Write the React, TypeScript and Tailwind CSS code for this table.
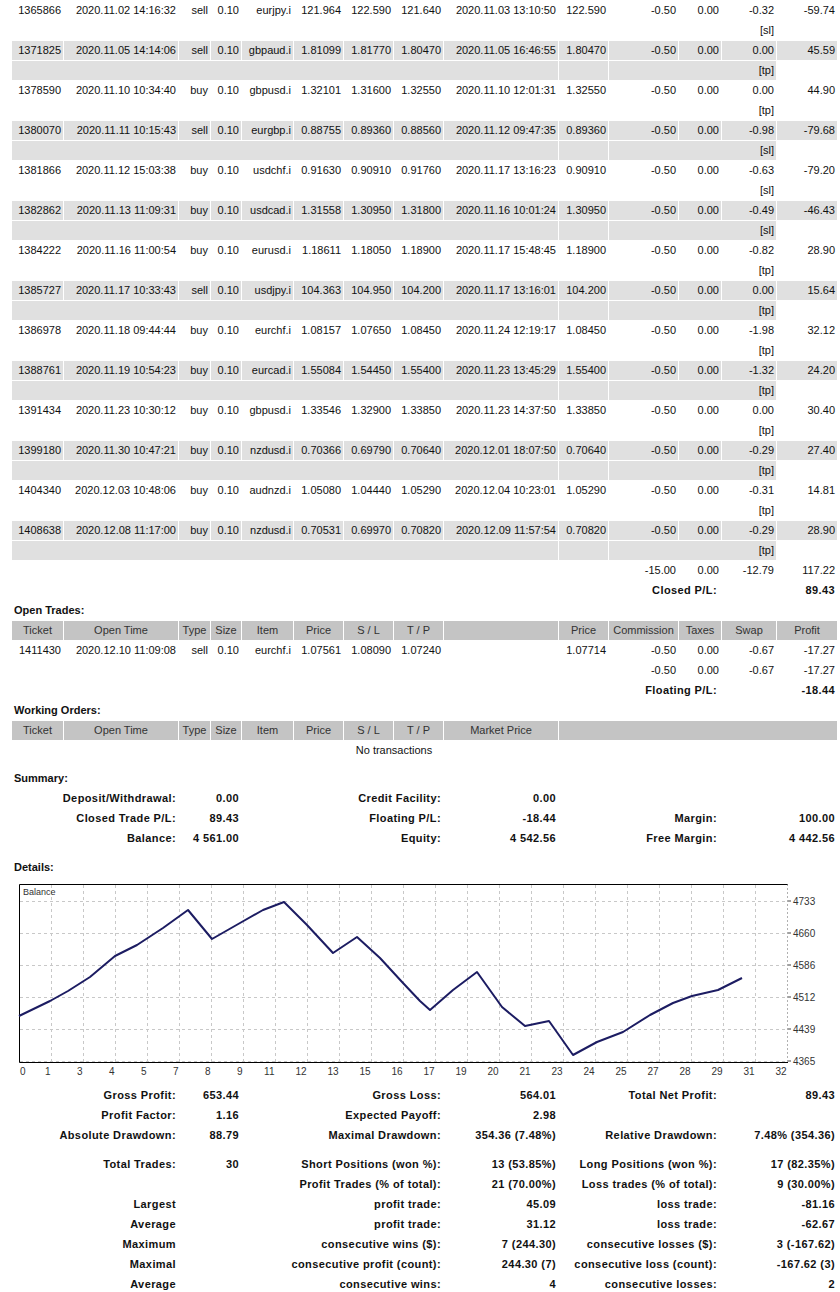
import React from "react";

type Trade = {
  ticket: string;
  open: string;
  type: string;
  item: string;
  price: string;
  sl: string;
  tp: string;
  close: string;
  cprice: string;
  swap: string;
  profit: string;
  comment: string;
};

const trades: Trade[] = [
  { ticket: "1365866", open: "2020.11.02 14:16:32", type: "sell", item: "eurjpy.i", price: "121.964", sl: "122.590", tp: "121.640", close: "2020.11.03 13:10:50", cprice: "122.590", swap: "-0.32", profit: "-59.74", comment: "[sl]" },
  { ticket: "1371825", open: "2020.11.05 14:14:06", type: "sell", item: "gbpaud.i", price: "1.81099", sl: "1.81770", tp: "1.80470", close: "2020.11.05 16:46:55", cprice: "1.80470", swap: "0.00", profit: "45.59", comment: "[tp]" },
  { ticket: "1378590", open: "2020.11.10 10:34:40", type: "buy", item: "gbpusd.i", price: "1.32101", sl: "1.31600", tp: "1.32550", close: "2020.11.10 12:01:31", cprice: "1.32550", swap: "0.00", profit: "44.90", comment: "[tp]" },
  { ticket: "1380070", open: "2020.11.11 10:15:43", type: "sell", item: "eurgbp.i", price: "0.88755", sl: "0.89360", tp: "0.88560", close: "2020.11.12 09:47:35", cprice: "0.89360", swap: "-0.98", profit: "-79.68", comment: "[sl]" },
  { ticket: "1381866", open: "2020.11.12 15:03:38", type: "buy", item: "usdchf.i", price: "0.91630", sl: "0.90910", tp: "0.91760", close: "2020.11.17 13:16:23", cprice: "0.90910", swap: "-0.63", profit: "-79.20", comment: "[sl]" },
  { ticket: "1382862", open: "2020.11.13 11:09:31", type: "buy", item: "usdcad.i", price: "1.31558", sl: "1.30950", tp: "1.31800", close: "2020.11.16 10:01:24", cprice: "1.30950", swap: "-0.49", profit: "-46.43", comment: "[sl]" },
  { ticket: "1384222", open: "2020.11.16 11:00:54", type: "buy", item: "eurusd.i", price: "1.18611", sl: "1.18050", tp: "1.18900", close: "2020.11.17 15:48:45", cprice: "1.18900", swap: "-0.82", profit: "28.90", comment: "[tp]" },
  { ticket: "1385727", open: "2020.11.17 10:33:43", type: "sell", item: "usdjpy.i", price: "104.363", sl: "104.950", tp: "104.200", close: "2020.11.17 13:16:01", cprice: "104.200", swap: "0.00", profit: "15.64", comment: "[tp]" },
  { ticket: "1386978", open: "2020.11.18 09:44:44", type: "buy", item: "eurchf.i", price: "1.08157", sl: "1.07650", tp: "1.08450", close: "2020.11.24 12:19:17", cprice: "1.08450", swap: "-1.98", profit: "32.12", comment: "[tp]" },
  { ticket: "1388761", open: "2020.11.19 10:54:23", type: "buy", item: "eurcad.i", price: "1.55084", sl: "1.54450", tp: "1.55400", close: "2020.11.23 13:45:29", cprice: "1.55400", swap: "-1.32", profit: "24.20", comment: "[tp]" },
  { ticket: "1391434", open: "2020.11.23 10:30:12", type: "buy", item: "gbpusd.i", price: "1.33546", sl: "1.32900", tp: "1.33850", close: "2020.11.23 14:37:50", cprice: "1.33850", swap: "0.00", profit: "30.40", comment: "[tp]" },
  { ticket: "1399180", open: "2020.11.30 10:47:21", type: "buy", item: "nzdusd.i", price: "0.70366", sl: "0.69790", tp: "0.70640", close: "2020.12.01 18:07:50", cprice: "0.70640", swap: "-0.29", profit: "27.40", comment: "[tp]" },
  { ticket: "1404340", open: "2020.12.03 10:48:06", type: "buy", item: "audnzd.i", price: "1.05080", sl: "1.04440", tp: "1.05290", close: "2020.12.04 10:23:01", cprice: "1.05290", swap: "-0.31", profit: "14.81", comment: "[tp]" },
  { ticket: "1408638", open: "2020.12.08 11:17:00", type: "buy", item: "nzdusd.i", price: "0.70531", sl: "0.69970", tp: "0.70820", close: "2020.12.09 11:57:54", cprice: "0.70820", swap: "-0.29", profit: "28.90", comment: "[tp]" },
];

const colWidths = [
  "w-[51px]", "w-[114px]", "w-[31px]", "w-[30px]", "w-[51px]", "w-[49px]", "w-[49px]",
  "w-[49px]", "w-[114px]", "w-[49px]", "w-[69px]", "w-[42px]", "w-[54px]", "w-[60px]",
];

const td = "h-[19px] p-0 pr-[2px] text-right whitespace-nowrap overflow-hidden";
const gray = "bg-[#e0e0e0]";
const head = "h-[19px] p-0 text-center whitespace-nowrap overflow-hidden bg-[#c4c4c4] text-[#333] font-normal";
const bold = "h-[19px] p-0 pr-[2px] text-right whitespace-nowrap font-bold tracking-[0.4px]";

function TradeRows({ t, shaded }: { t: Trade; shaded: boolean }) {
  const c = shaded ? `${td} ${gray}` : td;
  return (
    <>
      <tr>
        <td className={c}>{t.ticket}</td>
        <td className={c}>{t.open}</td>
        <td className={c}>{t.type}</td>
        <td className={c}>0.10</td>
        <td className={c}>{t.item}</td>
        <td className={c}>{t.price}</td>
        <td className={c}>{t.sl}</td>
        <td className={c}>{t.tp}</td>
        <td className={c}>{t.close}</td>
        <td className={c}>{t.cprice}</td>
        <td className={c}>-0.50</td>
        <td className={c}>0.00</td>
        <td className={c}>{t.swap}</td>
        <td className={c}>{t.profit}</td>
      </tr>
      <tr>
        <td colSpan={9} className={c}></td>
        <td className={c}></td>
        <td colSpan={3} className={c}>{t.comment}</td>
      </tr>
    </>
  );
}

function SectionTitle({ text, tall }: { text: string; tall?: boolean }) {
  return (
    <tr>
      <td colSpan={14} className={`${tall ? "h-[20px]" : "h-[19px]"} p-0 pl-[2px] text-left font-bold`}>
        {text}
      </td>
    </tr>
  );
}

function Spacer({ h }: { h: string }) {
  return (
    <tr>
      <td colSpan={14} className={`${h} p-0 leading-none`}></td>
    </tr>
  );
}

function StatRow({ cells }: { cells: string[] }) {
  return (
    <tr>
      <td colSpan={2} className={bold}>{cells[0]}</td>
      <td colSpan={2} className={bold}>{cells[1]}</td>
      <td colSpan={4} className={bold}>{cells[2]}</td>
      <td colSpan={1} className={bold}>{cells[3]}</td>
      <td colSpan={3} className={`${bold} pr-[4px]`}>{cells[4]}</td>
      <td colSpan={2} className={bold}>{cells[5]}</td>
    </tr>
  );
}

const balancePts =
  "19,1016 50,1001 68,991 90,977 115,956 137,945 163,928 188,910 212,939 240,923 263,910 284,902 307,925 333,953 357,937 380,958 403,983 420,1001 430,1010 453,990 477,972 502,1007 525,1026 549,1021 573,1055 597,1042 623,1032 650,1015 673,1003 692,996 718,990 742,978";

const xLabels = ["0", "1", "3", "4", "5", "7", "8", "9", "11", "12", "13", "15", "16", "17", "19", "20", "21", "23", "24", "25", "27", "28", "29", "31", "32"];
const yLabels = ["4733", "4660", "4586", "4512", "4439", "4365"];

function BalanceChart() {
  return (
    <svg className="block" width={825} height={207} viewBox="12 878 825 207">
      <rect x={19.5} y={884.5} width={768} height={178} fill="#fff" />
      {Array.from({ length: 23 }, (_, i) => {
        const x = 19.5 + 32 * (i + 1);
        return <line key={i} x1={x} y1={885} x2={x} y2={1062} stroke="#c8c8c8" strokeDasharray="3 3" />;
      })}
      {yLabels.map((_, i) => {
        const y = 901.5 + 32 * i;
        return <line key={i} x1={20} y1={y} x2={788} y2={y} stroke="#c8c8c8" strokeDasharray="3 3" />;
      })}
      <line x1={787.5} y1={884} x2={787.5} y2={1063} stroke="#b0b0b0" strokeDasharray="2 2" />
      <path d="M787.5 884.5 H19.5 V1062.5 H788" fill="none" stroke="#000" strokeWidth={1} />
      {yLabels.map((l, i) => {
        const y = 901 + 32 * i;
        return (
          <g key={l}>
            <line x1={788} y1={y} x2={791} y2={y} stroke="#444" />
            <text x={793} y={y + 3.5} fontSize={10} fill="#333" fontFamily="'Liberation Sans', Arial, sans-serif">
              {l}
            </text>
          </g>
        );
      })}
      {xLabels.map((l, i) => (
        <text
          key={l}
          x={i === 0 ? 20 : 19.5 + 32 * i - 1}
          y={1075}
          fontSize={10}
          fill="#333"
          textAnchor={i === 0 ? "start" : "end"}
          fontFamily="'Liberation Sans', Arial, sans-serif"
        >
          {l}
        </text>
      ))}
      <text x={23} y={895} fontSize={9} fill="#333" fontFamily="'Liberation Sans', Arial, sans-serif">
        Balance
      </text>
      <polyline points={balancePts} fill="none" stroke="#1c1c62" strokeWidth={2} strokeLinejoin="round" />
    </svg>
  );
}

export default function App() {
  return (
    <div className="w-[840px] h-[1292px] overflow-hidden bg-white text-[#111] font-['Liberation_Sans',Arial,sans-serif] text-[11px] leading-[19px]">
      <table className="ml-[11px] w-[827px] table-fixed border-separate border-spacing-[1px]">
        <colgroup>
          {colWidths.map((w, i) => (
            <col key={i} className={w} />
          ))}
        </colgroup>
        <tbody>
          {trades.map((t, i) => (
            <TradeRows key={t.ticket} t={t} shaded={i % 2 === 1} />
          ))}
          <tr>
            <td colSpan={10} className={td}></td>
            <td className={td}>-15.00</td>
            <td className={td}>0.00</td>
            <td className={td}>-12.79</td>
            <td className={td}>117.22</td>
          </tr>
          <tr>
            <td colSpan={10} className={td}></td>
            <td colSpan={2} className={`${bold} pr-[4px]`}>Closed P/L:</td>
            <td className={td}></td>
            <td className={bold}>89.43</td>
          </tr>

          <SectionTitle text="Open Trades:" />
          <tr>
            <th className={head}>Ticket</th>
            <th className={head}>Open Time</th>
            <th className={head}>Type</th>
            <th className={head}>Size</th>
            <th className={head}>Item</th>
            <th className={head}>Price</th>
            <th className={head}>S / L</th>
            <th className={head}>T / P</th>
            <th className={head}></th>
            <th className={head}>Price</th>
            <th className={head}>Commission</th>
            <th className={head}>Taxes</th>
            <th className={head}>Swap</th>
            <th className={head}>Profit</th>
          </tr>
          <tr>
            <td className={td}>1411430</td>
            <td className={td}>2020.12.10 11:09:08</td>
            <td className={td}>sell</td>
            <td className={td}>0.10</td>
            <td className={td}>eurchf.i</td>
            <td className={td}>1.07561</td>
            <td className={td}>1.08090</td>
            <td className={td}>1.07240</td>
            <td className={td}></td>
            <td className={td}>1.07714</td>
            <td className={td}>-0.50</td>
            <td className={td}>0.00</td>
            <td className={td}>-0.67</td>
            <td className={td}>-17.27</td>
          </tr>
          <tr>
            <td colSpan={10} className={td}></td>
            <td className={td}>-0.50</td>
            <td className={td}>0.00</td>
            <td className={td}>-0.67</td>
            <td className={td}>-17.27</td>
          </tr>
          <tr>
            <td colSpan={10} className={td}></td>
            <td colSpan={2} className={`${bold} pr-[4px]`}>Floating P/L:</td>
            <td className={td}></td>
            <td className={bold}>-18.44</td>
          </tr>

          <SectionTitle text="Working Orders:" />
          <tr>
            <th className={head}>Ticket</th>
            <th className={head}>Open Time</th>
            <th className={head}>Type</th>
            <th className={head}>Size</th>
            <th className={head}>Item</th>
            <th className={head}>Price</th>
            <th className={head}>S / L</th>
            <th className={head}>T / P</th>
            <th className={head}>Market Price</th>
            <th colSpan={5} className={head}></th>
          </tr>
          <tr>
            <td colSpan={13} className="h-[19px] p-0 text-center">No transactions</td>
            <td className={td}></td>
          </tr>

          <Spacer h="h-[6px]" />
          <SectionTitle text="Summary:" tall />
          <StatRow cells={["Deposit/Withdrawal:", "0.00", "Credit Facility:", "0.00", "", ""]} />
          <StatRow cells={["Closed Trade P/L:", "89.43", "Floating P/L:", "-18.44", "Margin:", "100.00"]} />
          <StatRow cells={["Balance:", "4 561.00", "Equity:", "4 542.56", "Free Margin:", "4 442.56"]} />

          <Spacer h="h-[7px]" />
          <SectionTitle text="Details:" tall />
          <tr>
            <td colSpan={14} className="p-0 h-[207px] leading-none">
              <BalanceChart />
            </td>
          </tr>

          <StatRow cells={["Gross Profit:", "653.44", "Gross Loss:", "564.01", "Total Net Profit:", "89.43"]} />
          <StatRow cells={["Profit Factor:", "1.16", "Expected Payoff:", "2.98", "", ""]} />
          <StatRow cells={["Absolute Drawdown:", "88.79", "Maximal Drawdown:", "354.36 (7.48%)", "Relative Drawdown:", "7.48% (354.36)"]} />
          <Spacer h="h-[8px]" />
          <StatRow cells={["Total Trades:", "30", "Short Positions (won %):", "13 (53.85%)", "Long Positions (won %):", "17 (82.35%)"]} />
          <StatRow cells={["", "", "Profit Trades (% of total):", "21 (70.00%)", "Loss trades (% of total):", "9 (30.00%)"]} />
          <StatRow cells={["Largest", "", "profit trade:", "45.09", "loss trade:", "-81.16"]} />
          <StatRow cells={["Average", "", "profit trade:", "31.12", "loss trade:", "-62.67"]} />
          <StatRow cells={["Maximum", "", "consecutive wins ($):", "7 (244.30)", "consecutive losses ($):", "3 (-167.62)"]} />
          <StatRow cells={["Maximal", "", "consecutive profit (count):", "244.30 (7)", "consecutive loss (count):", "-167.62 (3)"]} />
          <StatRow cells={["Average", "", "consecutive wins:", "4", "consecutive losses:", "2"]} />
        </tbody>
      </table>
    </div>
  );
}
